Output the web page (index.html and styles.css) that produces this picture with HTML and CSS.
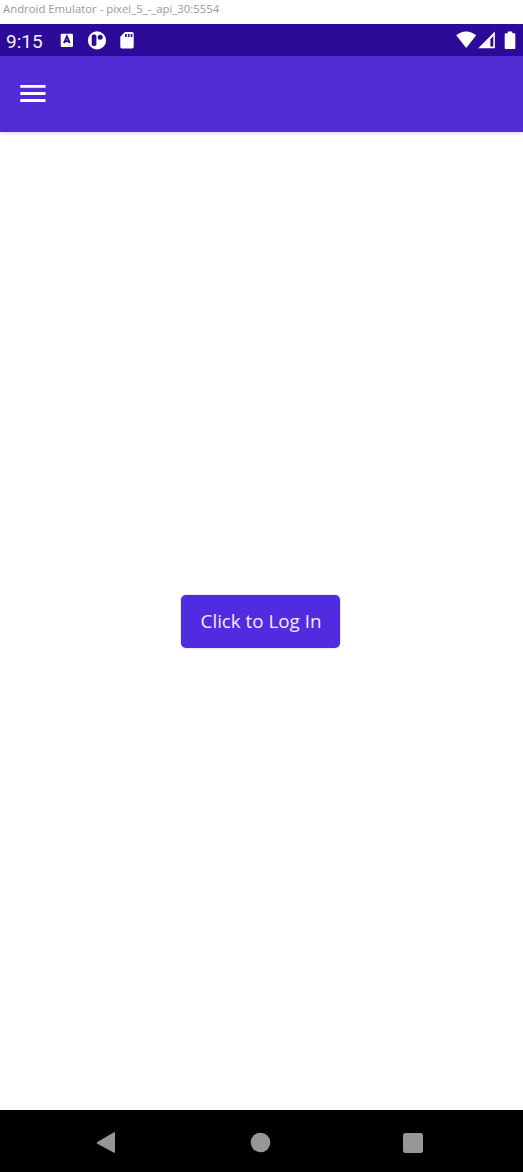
FILE: index.html
```html
<!DOCTYPE html>
<html lang="en">
<head>
<meta charset="utf-8">
<title>Android Emulator</title>
<link rel="stylesheet" href="styles.css">
</head>
<body>
<div class="window">
  <div class="titlebar"><span class="title">Android Emulator - pixel_5_-_api_30:5554</span></div>
  <div class="statusbar">
    <span class="clock">9:15</span>
    <svg class="notifications" width="80" height="32" viewBox="0 0 80 32">
      <rect x="4.700" y="9.800" width="12.3" height="13.2" rx="1.2" fill="#fff"/>
      <path d="M8 19.2 10.900 12.400 13.800 19.200M9.200 17.200h3.500" fill="none" stroke="#2b0b98" stroke-width="1.900"/>
      <path d="M11.5 21.500h4" stroke="#b8afe0" stroke-width=".8"/>
      <circle cx="41" cy="16.4" r="9.100" fill="#fff"/>
      <rect x="35.700" y="10.500" width="4.700" height="11.600" rx="1.800" fill="#2b0b98"/>
      <circle cx="44.200" cy="13.200" r="2.500" fill="#2b0b98"/>
      <path d="M69 8h7q1.700 0 1.700 1.700v13q0 1.700-1.700 1.700H66q-1.700 0-1.700-1.700V12.700z" fill="#fff"/>
      <path d="M69.900 10v3M72.700 10v3M75.500 10v3" stroke="#2b0b98" stroke-width="1.700"/>
    </svg>
    <svg class="system" width="67" height="32" viewBox="0 0 67 32">
      <path d="M0.200 11.300Q4.800 7.500 10.200 7.500T20.200 11.300L10.200 24z" fill="#fff"/>
      <path d="M22.200 24.200 38.900 7.500V24.200z" fill="#fff"/>
      <path d="M34.400 15.100 37.300 12.200V22.500H34.400z" fill="#2b0b98"/>
      <path d="M51.700 7.500h4.600v1.700h2q1 0 1 1V24q0 1-1 1h-8.600q-1 0-1-1V10.200q0-1 1-1h2z" fill="#fff"/>
    </svg>
  </div>
  <header class="appbar">
    <svg class="menu" width="26" height="18" viewBox="0 0 26 18">
      <path d="M.3 1.400h25.200M.3 8.500h25.200M.3 15.500h25.200" stroke="#fff" stroke-width="2.800"/>
    </svg>
  </header>
  <main class="content">
    <button class="login">Click to Log In</button>
  </main>
  <nav class="navbar">
    <svg width="20" height="23" viewBox="0 0 20 23"><path d="M1 11.300 18 1.300Q19 1 19 2V21Q19 22 18 21.800L1 12.400Q.3 11.900 1 11.300z" fill="#99969a"/></svg>
    <svg width="20" height="20" viewBox="0 0 20 20"><circle cx="10.500" cy="9.500" r="9.800" fill="#99969a"/></svg>
    <svg width="20" height="20" viewBox="0 0 20 20"><rect width="20" height="20" rx="2.500" fill="#99969a"/></svg>
  </nav>
</div>
</body>
</html>
```
FILE: styles.css
```css
* { box-sizing: border-box; }
body { margin: 0; background: #fff; }
.window {
  width: 523px;
  height: 1172px;
  display: flex;
  flex-direction: column;
  overflow: hidden;
}
.titlebar {
  height: 24px;
  padding-left: 3px;
  font: 11.350px/18px "Open Sans", sans-serif;
  color: #999;
  white-space: nowrap;
}
.statusbar {
  height: 32px;
  display: flex;
  align-items: center;
  padding: 0 0 0 6px;
  background: #2b0b98;
}
.clock {
  width: 50px;
  padding-top: 3px;
  font: 19px/32px Roboto, sans-serif;
  color: #f1effa;
  white-space: nowrap;
}
.system { margin-left: auto; }
.statusbar svg { display: block; }
.appbar {
  height: 76px;
  padding: 29px 20px 0;
  background: #512bd4;
  box-shadow: 0 1px 4px rgba(0, 0, 0, .18);
}
.menu { display: block; }
.content {
  flex: 1;
  display: flex;
  justify-content: center;
  align-items: flex-start;
  padding: 463px 2px 0 0;
}
.login {
  width: 159px;
  height: 53px;
  border: 0;
  border-radius: 5px;
  padding: 0 0 0 1px;
  background: #512bdf;
  color: #f1edff;
  font: 18.800px/53px "Open Sans", sans-serif;
  white-space: nowrap;
  box-shadow: 0 0 2px rgba(0, 0, 0, .3);
}
.navbar {
  height: 62px;
  display: flex;
  justify-content: space-between;
  align-items: center;
  padding: 3px 100px 0 96px;
  background: #000;
}
.navbar svg { overflow: visible; }
```
